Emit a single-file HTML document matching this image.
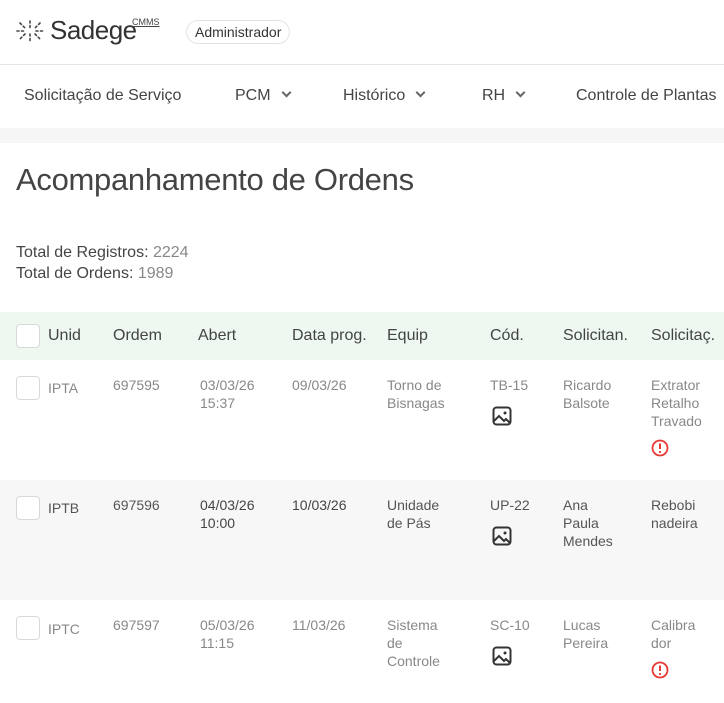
<!DOCTYPE html>
<html><head><meta charset="utf-8"><style>
*{margin:0;padding:0;box-sizing:border-box}
body{width:724px;height:703px;overflow:hidden;background:#fff;font-family:"Liberation Sans",sans-serif;color:#333;position:relative}
.abs{position:absolute;white-space:nowrap}
.hdr{position:absolute;left:0;top:0;width:724px;height:65px;border-bottom:1px solid #e6e6e6}
.nav{font-size:16px;color:#444;top:87px}
.chev{display:inline-block;width:7px;height:7px;border-right:2px solid #666;border-bottom:2px solid #666;transform:rotate(45deg);margin-left:12px;position:relative;top:-4px}
.cb{position:absolute;width:24px;height:24px;border:1px solid #d8d8d8;border-radius:4px;background:#fff}
.th{font-size:16px;color:#444;top:327px}
.td{font-size:14px;color:#888;line-height:18px}
.img{position:absolute;width:20px;height:20px}
</style></head><body>
<div class="hdr"></div>
<svg class="abs" style="left:16px;top:20px" width="28" height="22" viewBox="0 0 28 22"><g stroke="#444" stroke-width="1.6" stroke-linecap="round" stroke-dasharray="2 2.5"><path d="M14 1v7M14 14v7M1 11h7M20 11h7M4 3l5 5M19 14l5 5M24 3l-5 5M9 14l-5 5"/></g></svg>
<div class="abs" style="left:50px;top:15px;font-size:26px;color:#333;letter-spacing:-0.5px">Sadege</div>
<div class="abs" style="left:132px;top:17px;font-size:9px;color:#444;text-decoration:underline">CMMS</div>
<div class="abs" style="left:186px;top:20px;height:24px;padding:0 8px;border:1px solid #e3e3e3;border-radius:12px;font-size:14px;line-height:22px;color:#333">Administrador</div>
<div class="abs nav" style="left:24px">Solicitação de Serviço</div>
<div class="abs nav" style="left:235px">PCM<span class="chev"></span></div>
<div class="abs nav" style="left:343px">Histórico<span class="chev"></span></div>
<div class="abs nav" style="left:482px">RH<span class="chev"></span></div>
<div class="abs nav" style="left:576px">Controle de Plantas</div>
<div class="abs" style="left:0;top:128px;width:724px;height:15px;background:#f6f6f6"></div>
<div class="abs" style="left:16px;top:162px;font-size:31px;color:#444;letter-spacing:-0.3px">Acompanhamento de Ordens</div>
<div class="abs" style="left:16px;top:244px;font-size:16px;color:#444">Total de Registros: <span style="color:#888">2224</span></div>
<div class="abs" style="left:16px;top:265px;font-size:16px;color:#444">Total de Ordens: <span style="color:#888">1989</span></div>
<div class="abs" style="left:0;top:312px;width:724px;height:48px;background:#eef8f1"></div>
<div class="cb" style="left:16px;top:324px"></div>
<div class="abs th" style="left:48px">Unid</div>
<div class="abs th" style="left:113px">Ordem</div>
<div class="abs th" style="left:198px">Abert</div>
<div class="abs th" style="left:292px">Data prog.</div>
<div class="abs th" style="left:387px">Equip</div>
<div class="abs th" style="left:490px">Cód.</div>
<div class="abs th" style="left:563px">Solicitan.</div>
<div class="abs th" style="left:651px">Solicitaç.</div>
<div class="abs" style="left:0;top:480px;width:724px;height:120px;background:#f7f7f7"></div>

<div class="cb" style="left:16px;top:376px"></div>
<div class="abs td" style="left:48px;top:379px;font-size:14px">IPTA</div>
<div class="abs td" style="left:113px;top:376px">697595</div>
<div class="abs td" style="left:200px;top:376px">03/03/26<br>15:37</div>
<div class="abs td" style="left:292px;top:376px">09/03/26</div>
<div class="abs td" style="left:387px;top:376px">Torno de<br>Bisnagas</div>
<div class="abs td" style="left:490px;top:376px">TB-15</div>
<div class="abs td" style="left:563px;top:376px">Ricardo<br>Balsote</div>
<div class="abs td" style="left:651px;top:376px">Extrator<br>Retalho<br>Travado</div>

<div class="cb" style="left:16px;top:496px"></div>
<div class="abs td" style="left:48px;top:499px;font-size:14px;color:#555">IPTB</div>
<div class="abs td" style="left:113px;top:496px;color:#555">697596</div>
<div class="abs td" style="left:200px;top:496px;color:#444">04/03/26<br>10:00</div>
<div class="abs td" style="left:292px;top:496px;color:#444">10/03/26</div>
<div class="abs td" style="left:387px;top:496px;color:#555">Unidade<br>de Pás</div>
<div class="abs td" style="left:490px;top:496px;color:#555">UP-22</div>
<div class="abs td" style="left:563px;top:496px;color:#555">Ana<br>Paula<br>Mendes</div>
<div class="abs td" style="left:651px;top:496px;color:#555">Rebobi<br>nadeira</div>

<div class="cb" style="left:16px;top:616px"></div>
<div class="abs td" style="left:48px;top:620px;font-size:14px">IPTC</div>
<div class="abs td" style="left:113px;top:616px">697597</div>
<div class="abs td" style="left:200px;top:616px">05/03/26<br>11:15</div>
<div class="abs td" style="left:292px;top:616px">11/03/26</div>
<div class="abs td" style="left:387px;top:616px">Sistema<br>de<br>Controle</div>
<div class="abs td" style="left:490px;top:616px">SC-10</div>
<div class="abs td" style="left:563px;top:616px">Lucas<br>Pereira</div>
<div class="abs td" style="left:651px;top:616px">Calibra<br>dor</div>

<svg class="img" style="left:492px;top:406px" viewBox="0 0 20 20"><rect x="1.5" y="1.5" width="17" height="17" rx="3" fill="none" stroke="#333" stroke-width="2"/><path d="M2 15l5-5 5 5 2-2 4 4" fill="none" stroke="#333" stroke-width="2"/><circle cx="13" cy="7" r="1.5" fill="#333"/></svg>
<svg class="img" style="left:492px;top:526px" viewBox="0 0 20 20"><rect x="1.5" y="1.5" width="17" height="17" rx="3" fill="none" stroke="#333" stroke-width="2"/><path d="M2 15l5-5 5 5 2-2 4 4" fill="none" stroke="#333" stroke-width="2"/><circle cx="13" cy="7" r="1.5" fill="#333"/></svg>
<svg class="img" style="left:492px;top:646px" viewBox="0 0 20 20"><rect x="1.5" y="1.5" width="17" height="17" rx="3" fill="none" stroke="#333" stroke-width="2"/><path d="M2 15l5-5 5 5 2-2 4 4" fill="none" stroke="#333" stroke-width="2"/><circle cx="13" cy="7" r="1.5" fill="#333"/></svg>
<svg class="abs" style="left:651px;top:439px" width="18" height="18" viewBox="0 0 18 18"><circle cx="9" cy="9" r="7.5" fill="none" stroke="#e53935" stroke-width="1.8"/><path d="M9 4.5v5.5" stroke="#e53935" stroke-width="2"/><circle cx="9" cy="13" r="1.1" fill="#e53935"/></svg>
<svg class="abs" style="left:651px;top:661px" width="18" height="18" viewBox="0 0 18 18"><circle cx="9" cy="9" r="7.5" fill="none" stroke="#e53935" stroke-width="1.8"/><path d="M9 4.5v5.5" stroke="#e53935" stroke-width="2"/><circle cx="9" cy="13" r="1.1" fill="#e53935"/></svg>
</body></html>
